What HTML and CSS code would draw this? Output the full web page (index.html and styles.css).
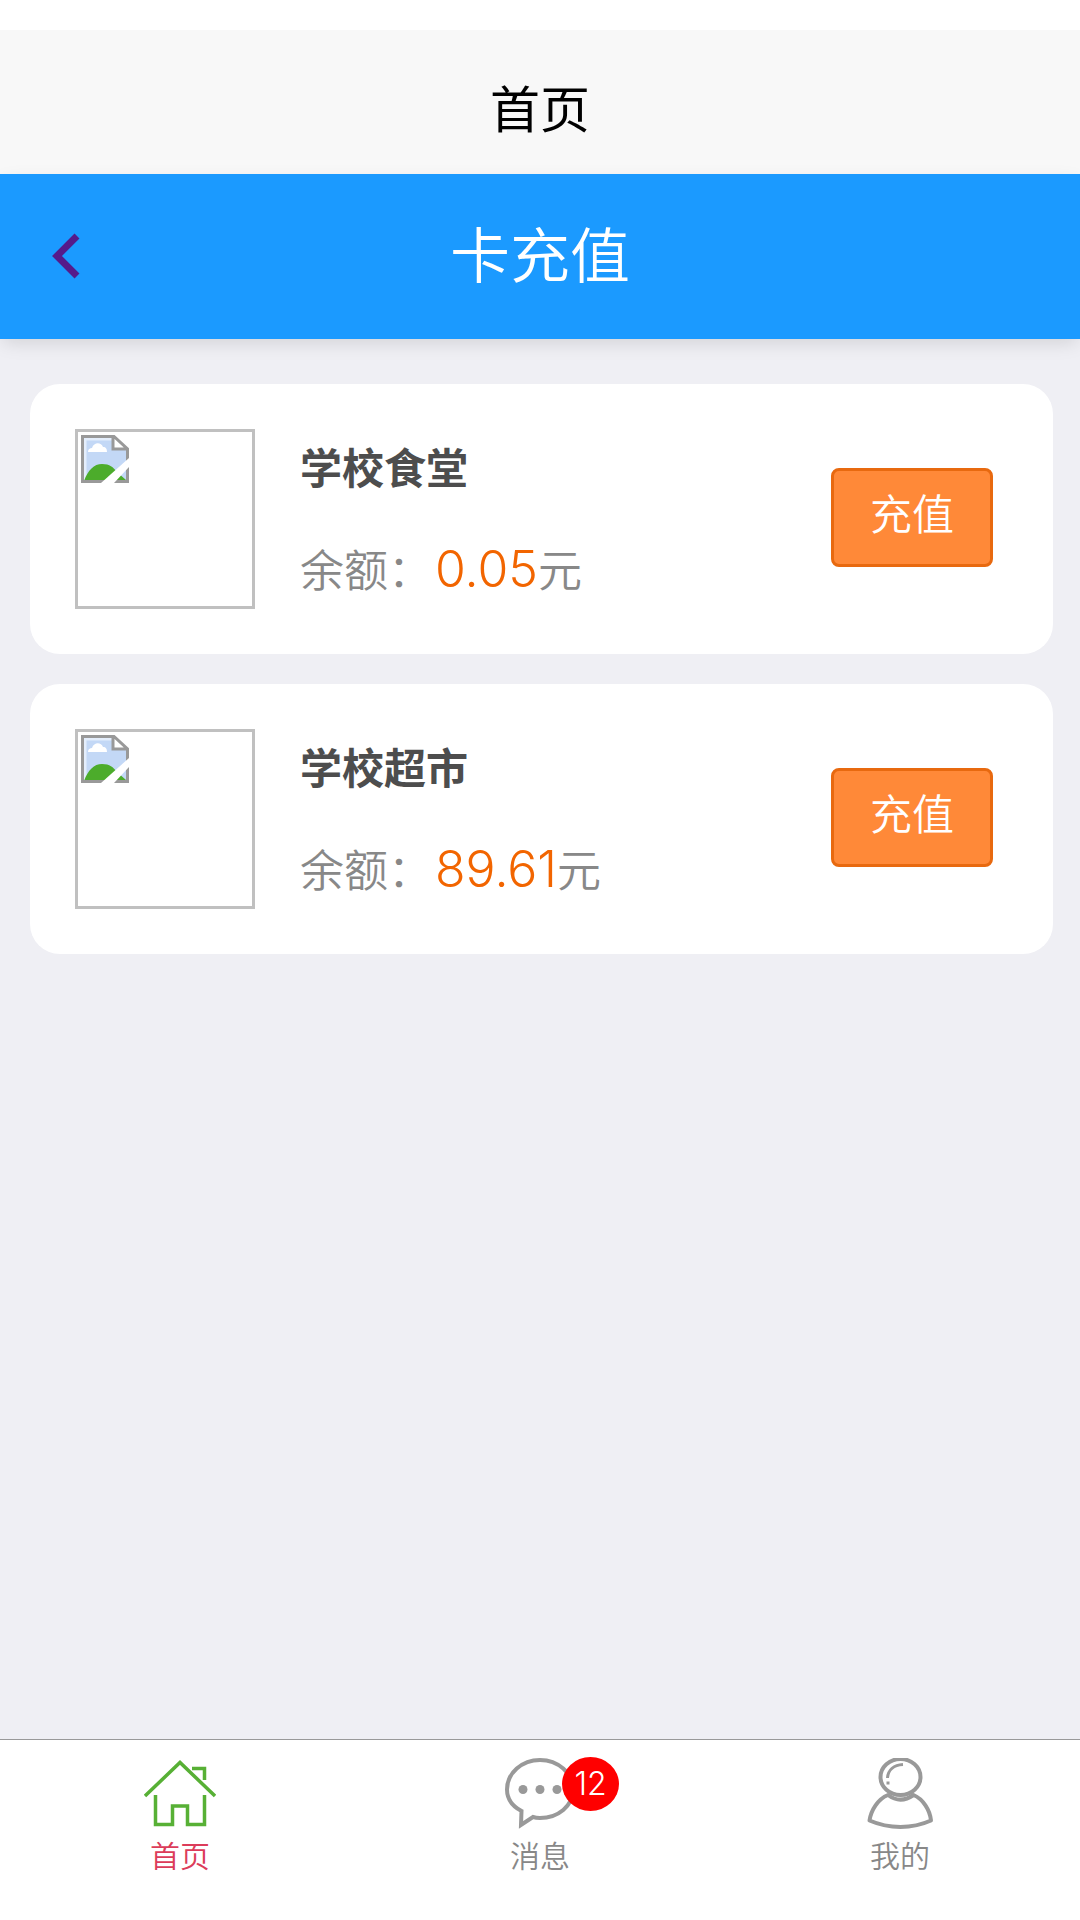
FILE: index.html
```html
<!DOCTYPE html>
<html lang="zh-CN">
<head>
<meta charset="utf-8">
<meta name="viewport" content="width=device-width, initial-scale=1">
<title>卡充值</title>
<link rel="stylesheet" href="styles.css">
</head>
<body>
<svg class="symbols" aria-hidden="true">
  <symbol id="broken-image" viewBox="0 0 48 48">
    <path d="M1.500 1.500H32L46.500 15V46.500H1.500Z" fill="#c3d8f6"/>
    <path d="M4 46V4H31" fill="none" stroke="#e4eefc" stroke-width="3"/>
    <path d="M7 17c0-3 2-4 4-4 2-6 9-6 11-1 3 0 4 2 4 5Z" fill="#fff"/>
    <path d="M3 46C7 35 13 29 21 29s11 3 15 8l9 8Z" fill="#4cac2b"/>
    <path d="M32 1.500V14H46.500Z" fill="#fff"/>
    <path d="M1.500 48V1.500H33L46.500 14V48M32 1.500V14H46.500M0 46.500H48" fill="none" stroke="#999" stroke-width="3"/>
    <path d="M20 48 48 23V32L33 48Z" fill="#fff"/>
  </symbol>
</svg>

<div class="page">
  <header class="app-bar"><h1 class="app-title">首页</h1></header>

  <div class="nav-bar">
    <a class="back" href="#" aria-label="返回">
      <svg class="back-icon" viewBox="0 0 30 46" aria-hidden="true"><path d="M26 3 6 23 26 43" fill="none" stroke="#551a8b" stroke-width="7"/></svg>
    </a>
    <h2 class="nav-title">卡充值</h2>
  </div>

  <main class="accounts">
    <section class="card">
      <div class="thumb"><svg class="thumb-icon" aria-hidden="true"><use href="#broken-image"/></svg></div>
      <div class="info">
        <h3 class="name">学校食堂</h3>
        <p class="balance">余额：<span class="amount">0.05</span>元</p>
      </div>
      <button class="recharge" type="button">充值</button>
    </section>
    <section class="card">
      <div class="thumb"><svg class="thumb-icon" aria-hidden="true"><use href="#broken-image"/></svg></div>
      <div class="info">
        <h3 class="name">学校超市</h3>
        <p class="balance">余额：<span class="amount">89.61</span>元</p>
      </div>
      <button class="recharge" type="button">充值</button>
    </section>
  </main>

  <nav class="tab-bar">
    <a class="tab tab-active" href="#">
      <span class="tab-figure">
        <svg class="tab-icon" viewBox="0 0 72 72" fill="none" stroke="#57b035" stroke-width="3.500" aria-hidden="true">
          <path d="M1 38 36 4.500 71 38M48 10.500H60.500V22M11.500 37V66.500H28.500V48H43.500V66.500H60.500V37"/>
        </svg>
      </span>
      <span class="tab-label">首页</span>
    </a>
    <a class="tab" href="#">
      <span class="tab-figure">
        <svg class="tab-icon" viewBox="0 0 72 72" fill="none" stroke="#999" stroke-width="4" aria-hidden="true">
          <path d="M17.500 53C8 48 3 40 3 31.500 3 15 18 2 36 2S69 15 69 31.500 54 60 36 60q-4 0-7-1L17 67Z"/>
          <g fill="#999" stroke="none"><circle cx="19" cy="31.500" r="4.500"/><circle cx="36" cy="31.500" r="4.500"/><circle cx="53" cy="31.500" r="4.500"/></g>
        </svg>
        <span class="badge">12</span>
      </span>
      <span class="tab-label">消息</span>
    </a>
    <a class="tab" href="#">
      <span class="tab-figure">
        <svg class="tab-icon" viewBox="0 0 72 72" fill="none" stroke="#999" stroke-width="4" aria-hidden="true">
          <ellipse cx="36.500" cy="19" rx="20" ry="18"/>
          <path d="M24 37C14 41 7 52 5.500 62.500 25 71 48 71 67 62.500 66 52 59 41 49.500 37 41 43 32 43 24 37Z" stroke-linejoin="round"/>
          <path d="M23.500 20C24 12 30 7 39 6.500M24 23.500v3" stroke-width="3"/>
        </svg>
      </span>
      <span class="tab-label">我的</span>
    </a>
  </nav>
</div>
</body>
</html>
```

FILE: styles.css
```css
* {
  box-sizing: border-box;
}

body {
  margin: 0;
  background: #efeff4;
  font-family: Inter, "Noto Sans CJK SC", sans-serif;
  font-weight: 350;
}

h1, h2, h3, p {
  margin: 0;
}

.symbols {
  display: none;
}

.page {
  display: flex;
  flex-direction: column;
  min-height: 100vh;
}

.app-bar {
  padding: 44px 0 28px;
  border-top: 30px solid #fff;
  background: #f8f8f8;
  text-align: center;
}

.app-title {
  color: #000;
  font-size: 50px;
  font-weight: 400;
  line-height: 72px;
}

.nav-bar {
  display: grid;
  grid-template-columns: 132px 1fr 132px;
  align-items: center;
  padding: 42px 0 43px;
  background: #1b9aff;
  box-shadow: 0 6px 18px -3px rgba(0, 0, 0, 0.13);
}

.back {
  display: flex;
  padding-left: 51px;
}

.back-icon {
  width: 30px;
  height: 46px;
}

.nav-title {
  color: #fff;
  font-size: 60px;
  font-weight: 350;
  line-height: 80px;
  text-align: center;
}

.accounts {
  display: flex;
  flex: 1;
  flex-direction: column;
  gap: 30px;
  padding: 45px 27px 45px 30px;
}

.card {
  display: flex;
  align-items: center;
  padding: 45px 60px 45px 45px;
  border-radius: 30px;
  background: #fff;
}

.thumb {
  width: 180px;
  height: 180px;
  padding: 3px;
  border: 3px solid #c0c0c0;
}

.thumb-icon {
  display: block;
  width: 48px;
  height: 48px;
}

.info {
  display: flex;
  flex: 1;
  flex-direction: column;
  gap: 34px;
  padding: 8px 0 0 45px;
}

.name {
  color: #4d4d4d;
  font-size: 42px;
  font-weight: 700;
  line-height: 60px;
}

.balance {
  color: #888;
  font-size: 44px;
  line-height: 72px;
}

.amount {
  margin-left: 3px;
  color: #f26500;
  font-size: 50px;
}

.recharge {
  height: 99px;
  margin-bottom: 4px;
  padding: 0 36px 12px;
  border: 3px solid #e8690f;
  border-radius: 8px;
  background: #ff8938;
  color: #fff;
  font: inherit;
  font-size: 42px;
}

.tab-bar {
  display: grid;
  grid-template-columns: repeat(3, 1fr);
  padding: 18px 0 44px;
  border-top: 1px solid #999;
  background: #fff;
}

.tab {
  display: flex;
  flex-direction: column;
  align-items: center;
  gap: 6px;
  color: #888;
  text-decoration: none;
}

.tab-active {
  color: #dc3c5a;
}

.tab-figure {
  position: relative;
}

.tab-icon {
  display: block;
  width: 72px;
  height: 72px;
}

.tab-label {
  font-size: 30px;
  line-height: 40px;
}

.badge {
  position: absolute;
  top: -1px;
  left: 58px;
  width: 57px;
  border-radius: 50%;
  background: #f00;
  color: #fff;
  font-size: 32px;
  font-weight: 300;
  line-height: 54px;
  text-align: center;
}
```
